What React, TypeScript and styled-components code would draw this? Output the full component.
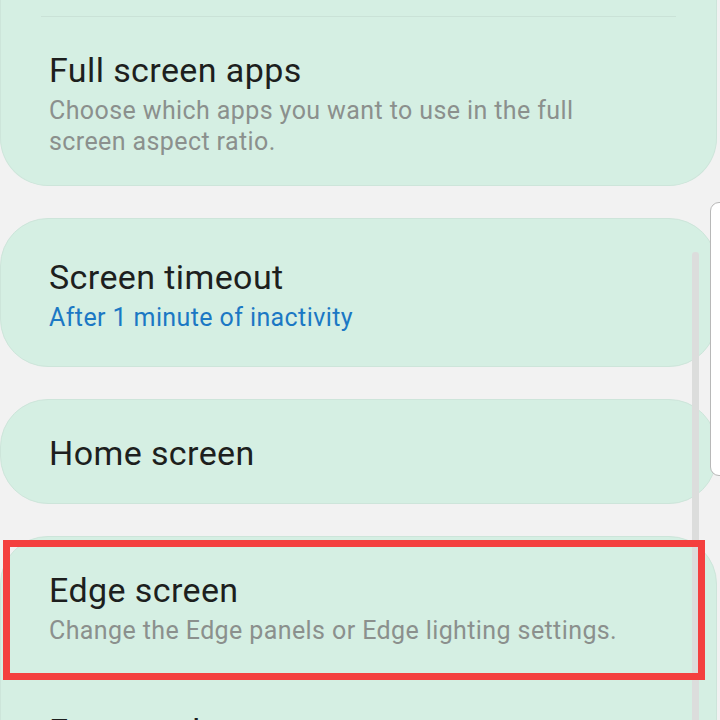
import styled, { createGlobalStyle } from 'styled-components';

const GlobalStyle = createGlobalStyle`
  html, body {
    margin: 0;
    padding: 0;
    background: #f2f2f2;
    font-family: Roboto, 'Noto Sans', Arial, sans-serif;
  }
  * {
    box-sizing: border-box;
  }
`;

type Item = {
  title: string;
  sub?: string;
  blue?: boolean;
  top?: number;
  bottom?: number;
  highlight?: boolean;
};

const cards: { items: Item[]; flatTop?: boolean; divider?: boolean }[] = [
  {
    flatTop: true,
    divider: true,
    items: [
      {
        title: 'Full screen apps',
        sub: 'Choose which apps you want to use in the full screen aspect ratio.',
      },
    ],
  },
  {
    items: [
      {
        title: 'Screen timeout',
        sub: 'After 1 minute of inactivity',
        blue: true,
        top: 38,
        bottom: 33,
      },
    ],
  },
  {
    items: [{ title: 'Home screen', bottom: 30 }],
  },
  {
    items: [
      {
        title: 'Edge screen',
        sub: 'Change the Edge panels or Edge lighting settings.',
        bottom: 32,
        highlight: true,
      },
      { title: 'Easy mode', sub: 'Switch to a simpler layout.' },
    ],
  },
];

const App = () => {
  return (
    <Screen>
      <GlobalStyle />
      <List>
        {cards.map((card, ci) => (
          <Card key={`card_${ci}`} $flatTop={card.flatTop} $last={ci === cards.length - 1}>
            {card.divider && <Divider />}
            {card.items.map((item, ii) => (
              <Row key={`row_${ci}_${ii}`} $top={item.top} $bottom={item.bottom}>
                <Title>{item.title}</Title>
                {item.sub && <Sub $blue={item.blue}>{item.sub}</Sub>}
                {item.highlight && <Highlight />}
              </Row>
            ))}
          </Card>
        ))}
      </List>
      <ScrollBar />
      <EdgeHandle />
    </Screen>
  );
};

const Screen = styled.div`
  position: relative;
  width: 720px;
  height: 720px;
  overflow: hidden;
  background: #f2f2f2;
`;

const List = styled.div`
  display: flex;
  flex-direction: column;
  gap: 32px;
`;

const Card = styled.div<{ $flatTop?: boolean; $last?: boolean }>`
  display: flex;
  flex-direction: column;
  margin-right: 3px;
  background: #d5efe3;
  border: 1px solid #cde5da;
  border-radius: ${(p) =>
    p.$flatTop ? '0 0 48px 48px' : p.$last ? '48px 48px 0 0' : '48px'};
  ${(p) => (p.$flatTop ? 'border-top: none;' : '')}
  ${(p) => (p.$last ? 'min-height: 260px;' : '')}
`;

const Divider = styled.div`
  height: 1px;
  margin: 16px 40px 0;
  background: rgba(0, 0, 0, 0.05);
`;

const Row = styled.div<{ $top?: number; $bottom?: number }>`
  position: relative;
  display: flex;
  flex-direction: column;
  padding: ${(p) => p.$top ?? 33}px 48px ${(p) => p.$bottom ?? 28}px;
`;

const Title = styled.div`
  font-size: 34px;
  line-height: 40px;
  color: #1d1f1e;
  letter-spacing: 0.4px;
`;

const Sub = styled.div<{ $blue?: boolean }>`
  margin-top: 5px;
  max-width: 600px;
  font-size: 25px;
  line-height: 31px;
  letter-spacing: 0.4px;
  color: ${(p) => (p.$blue ? '#1b78c4' : '#8b908d')};
`;

const Highlight = styled.span`
  position: absolute;
  z-index: 2;
  top: 3px;
  left: 2px;
  width: 702px;
  height: 140px;
  border: 7px solid #f4403f;
  pointer-events: none;
`;

const ScrollBar = styled.div`
  position: absolute;
  left: 692px;
  top: 252px;
  width: 7px;
  height: 520px;
  border-radius: 3px;
  background: #dcdddc;
`;

const EdgeHandle = styled.div`
  position: absolute;
  left: 710px;
  top: 202px;
  width: 24px;
  height: 274px;
  background: #ffffff;
  border: 1px solid #b8b8b8;
  border-radius: 9px;
`;

export default App;
